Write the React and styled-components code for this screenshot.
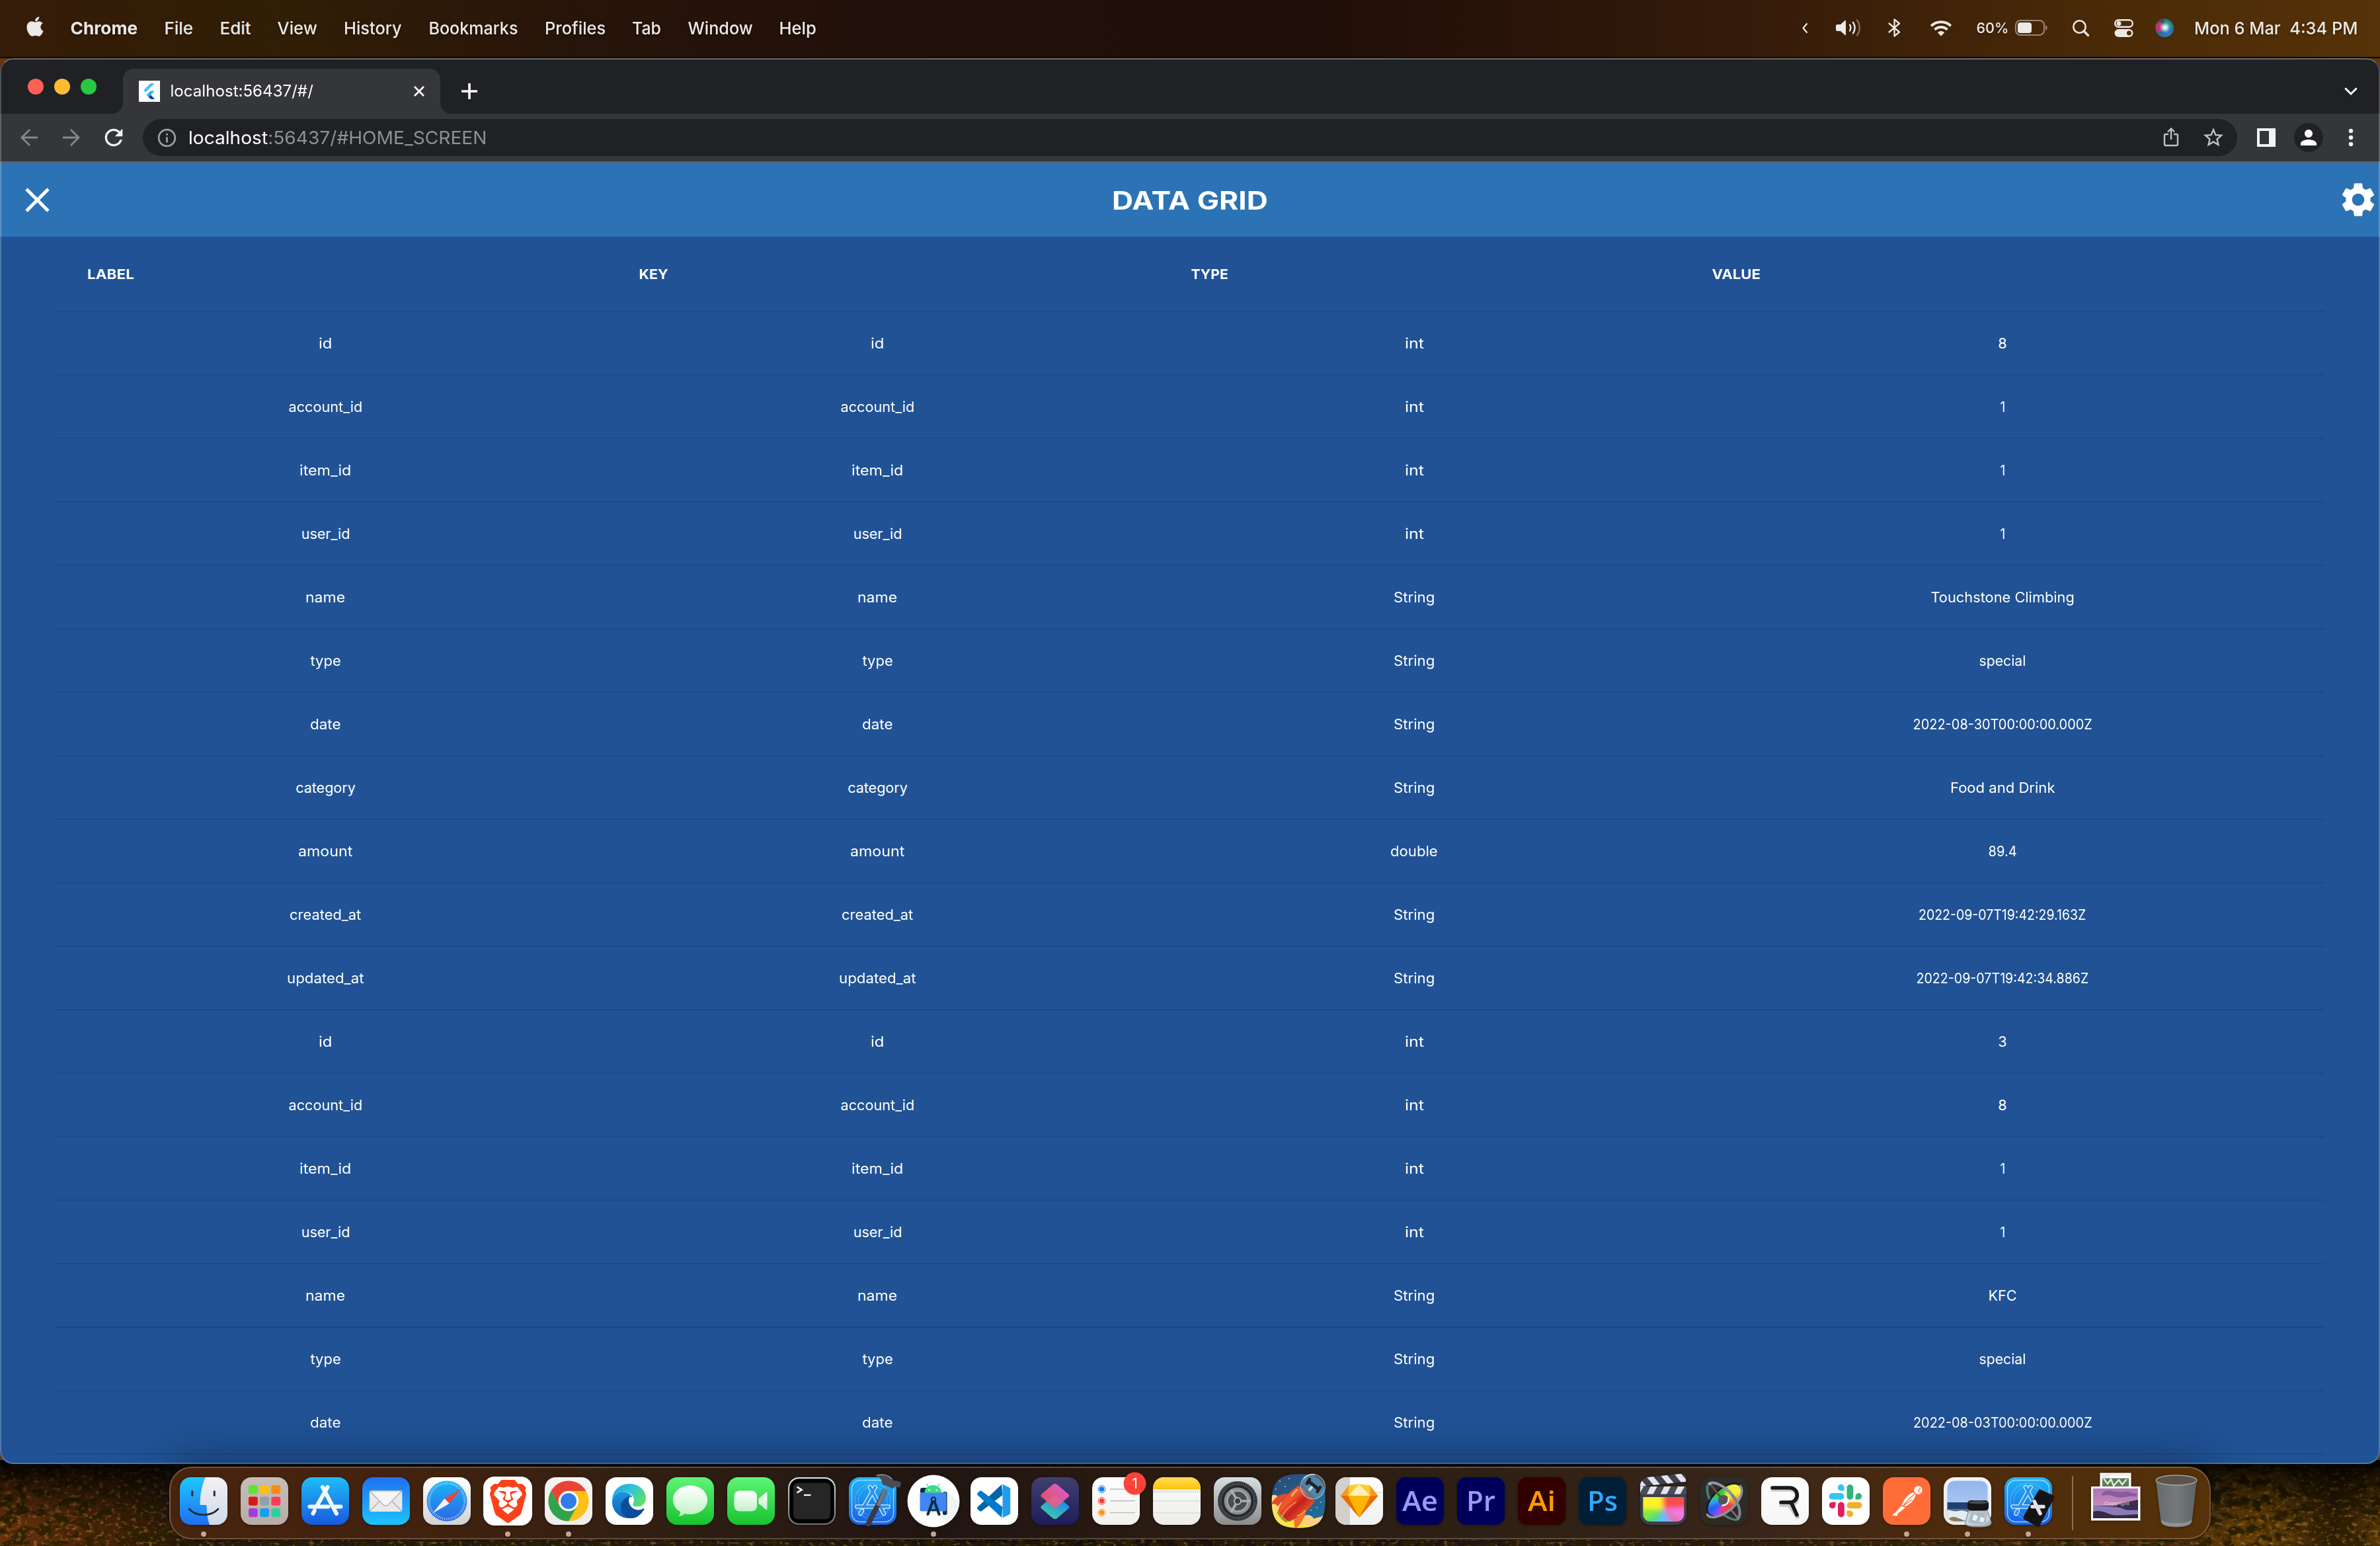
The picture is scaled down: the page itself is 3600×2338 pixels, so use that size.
import React, { useLayoutEffect, useRef, useState } from "react";
import styled, { createGlobalStyle } from "styled-components";
import { FaApple } from "react-icons/fa";
import { SiBrave } from "react-icons/si";
import { MdSettings, MdRefresh, MdInfoOutline, MdStarBorder, MdPerson } from "react-icons/md";

const UI = `Inter, Roboto, "Liberation Sans", sans-serif`;

const GlobalStyle = createGlobalStyle`
  *, *::before, *::after { box-sizing: border-box; }
  html, body { margin: 0; padding: 0; background: #0c0703; }
  body { font-family: ${UI}; overflow: hidden; }
  svg { display: block; flex: none; overflow: visible; }
`;

/* ---------- text that fills a known width ---------- */

const FitBox = styled.span`
  display: inline-flex;
  justify-content: center;
  flex: none;
  width: ${(p) => p.$width}px;
  white-space: pre;
`;
const FitInner = styled.span`
  display: inline-block;
  flex: none;
`;

function Fit({ width, children }) {
  const ref = useRef(null);
  const [scale, setScale] = useState(1);
  useLayoutEffect(() => {
    const natural = ref.current.offsetWidth;
    if (natural) setScale(width / natural);
  }, [width, children]);
  return (
    <FitBox $width={width}>
      <FitInner ref={ref} style={{ transform: `scaleX(${scale})` }}>
        {children}
      </FitInner>
    </FitBox>
  );
}

/* ---------- desktop ---------- */

const Desktop = styled.div`
  position: relative;
  isolation: isolate;
  width: 3600px;
  height: 2338px;
  display: flex;
  flex-direction: column;
  align-items: center;
  overflow: hidden;
  background: linear-gradient(90deg, #6b340c 0, #4a240a 160px, #2a1607 280px, #2a1a0b 900px, #1a0f07 1600px, #2a1a10 2500px, #5a3208 3250px, #6a4307 3440px, #2b1a05 3530px, #5d3a08 3600px);
`;
const Texture = styled.svg`
  position: absolute;
  left: 0;
  bottom: 0;
  z-index: -1;
`;

function WallpaperTexture() {
  return (
    <Texture width="3600" height="130" viewBox="0 0 3600 130">
      <filter id="grain" x="0" y="0" width="100%" height="100%">
        <feTurbulence type="fractalNoise" baseFrequency="0.05 0.07" numOctaves="5" seed="11" />
        <feColorMatrix values="0 0 0 0 0.03  0 0 0 0 0.015  0 0 0 0 0  5 0 0 0 -2.1" />
      </filter>
      <filter id="spark" x="0" y="0" width="100%" height="100%">
        <feTurbulence type="fractalNoise" baseFrequency="0.12 0.17" numOctaves="3" seed="4" />
        <feColorMatrix values="0 0 0 0 0.66  0 0 0 0 0.32  0 0 0 0 0.05  0 4 0 0 -2.2" />
      </filter>
      <linearGradient id="shade" x1="0" y1="0" x2="0" y2="1">
        <stop offset="0" stopColor="#000" stopOpacity="0.95" />
        <stop offset="0.25" stopColor="#000" stopOpacity="0.6" />
        <stop offset="0.75" stopColor="#000" stopOpacity="0.05" />
      </linearGradient>
      <rect width="3600" height="130" filter="url(#grain)" />
      <rect width="3600" height="130" filter="url(#spark)" opacity="0.5" />
      <rect width="3600" height="130" fill="url(#shade)" />
    </Texture>
  );
}

/* ---------- menu bar ---------- */

const MenuBar = styled.header`
  flex: none;
  width: 100%;
  height: 86px;
  margin-bottom: 2px;
  padding: 0 34px 2px 40px;
  display: flex;
  align-items: center;
  justify-content: space-between;
  color: #ece9e6;
  font-size: 26px;
  text-shadow: 0 2px 4px rgba(0, 0, 0, 0.35);
  background: linear-gradient(90deg, #351c08 0, #301e06 420px, #27140a 900px, #22100a 1300px, #200e08 2000px, #331a0a 2600px, #4a2a07 3200px, #563208 3600px);
  box-shadow: 0 2px 0 #0c0703;
`;
const Cluster = styled.div`
  display: flex;
  align-items: center;
`;
const Menus = styled.nav`
  display: flex;
  align-items: center;
  gap: 40.3px;
`;
const MenuItem = styled.span`
  font-weight: ${(p) => (p.$strong ? 700 : 500)};
`;
const Status = styled.span`
  display: flex;
  align-items: center;
  margin-left: ${(p) => p.$gap}px;
  font-size: ${(p) => (p.$small ? 22 : 26)}px;
  font-weight: 500;
`;
const AppleMark = styled(FaApple)`
  width: 30px;
  height: 34px;
  margin: -4px 38px 0 -2px;
`;

const MENUS = [
  ["Chrome", 102], ["File", 44], ["Edit", 47], ["View", 60], ["History", 88],
  ["Bookmarks", 135], ["Profiles", 92], ["Tab", 44], ["Window", 98], ["Help", 56],
];

const ink = "#ece9e6";

const ChevronLeft = () => (
  <svg width="8" height="15" viewBox="0 0 8 15">
    <path d="M7 1 1.5 7.5 7 14" fill="none" stroke={ink} strokeWidth="2.2" strokeLinecap="round" strokeLinejoin="round" />
  </svg>
);
const Volume = () => (
  <svg width="38" height="26" viewBox="0 0 38 26">
    <path d="M2.500 8H7l6-5.600c1.200-1 2-.6 2 .6v20c0 1.200-.8 1.600-2 .6L7 18H2.500C.8 18 0 17.200 0 15.500v-5C0 8.800.8 8 2.500 8Z" fill={ink} />
    <path d="M21 8.500c1.600 2.600 1.600 6.400 0 9M26 4.800c3.200 5 3.200 11.400 0 16.400" fill="none" stroke={ink} strokeWidth="2.400" strokeLinecap="round" />
    <path d="M32 1.500c5 7 5 16 0 23" fill="none" stroke={ink} strokeOpacity="0.4" strokeWidth="2.400" strokeLinecap="round" />
  </svg>
);
const Bluetooth = () => (
  <svg width="19" height="28" viewBox="0 0 19 28">
    <path d="M1.500 7.500 17 20.500 9.500 26.500V1.500L17 7.500 1.500 20.500" fill="none" stroke={ink} strokeWidth="2.300" strokeLinejoin="round" strokeLinecap="round" />
  </svg>
);
const Wifi = () => (
  <svg width="34" height="25" viewBox="0 0 34 25">
    <path d="M2.200 9.200a21.500 21.500 0 0 1 29.600 0" fill="none" stroke={ink} strokeWidth="4" />
    <path d="M7.500 14.800a14 14 0 0 1 19 0" fill="none" stroke={ink} strokeWidth="4" />
    <path d="M17 24.500 11.800 19.200a7.400 7.400 0 0 1 10.400 0Z" fill={ink} />
  </svg>
);
const Battery = () => (
  <svg width="49" height="24" viewBox="0 0 49 24">
    <rect x="1" y="1" width="43" height="22" rx="7" fill="none" stroke={ink} strokeOpacity="0.5" strokeWidth="2" />
    <rect x="4" y="4" width="21" height="16" rx="4" fill={ink} />
    <path d="M46 8c3.600 1.500 3.600 6.500 0 8Z" fill={ink} fillOpacity="0.5" />
  </svg>
);
const Search = () => (
  <svg width="25" height="25" viewBox="0 0 25 25">
    <circle cx="10.500" cy="10.500" r="9.200" fill="none" stroke={ink} strokeWidth="2.600" />
    <path d="m17 17 6.500 6.500" stroke={ink} strokeWidth="3.200" strokeLinecap="round" />
  </svg>
);
const ControlCentre = () => (
  <svg width="29" height="27" viewBox="0 0 29 27">
    <rect x="1.200" y="1.200" width="26.600" height="10.600" rx="5.300" fill="none" stroke={ink} strokeWidth="2.400" />
    <circle cx="7" cy="6.500" r="3.400" fill={ink} />
    <path fillRule="evenodd" d="M6.500 15h16a6 6 0 0 1 0 12h-16a6 6 0 0 1 0-12Zm16 2.500a3.500 3.500 0 1 0 0 7 3.500 3.500 0 0 0 0-7Z" fill={ink} />
  </svg>
);
const Siri = () => (
  <svg width="28" height="28" viewBox="0 0 28 28">
    <radialGradient id="siriCore"><stop offset="0" stopColor="#fff" /><stop offset="0.35" stopColor="#dff" stopOpacity="0.8" /><stop offset="1" stopColor="#8cf" stopOpacity="0" /></radialGradient>
    <linearGradient id="siriBase" x1="0" y1="0" x2="0.6" y2="1"><stop offset="0" stopColor="#4b4058" /><stop offset="0.5" stopColor="#3a5a78" /><stop offset="1" stopColor="#2a7fd0" /></linearGradient>
    <circle cx="14" cy="14" r="14" fill="url(#siriBase)" />
    <path d="M13 1a13 13 0 0 1 13 12c-5 1-10-1-13-12Z" fill="#12a07a" opacity="0.85" />
    <ellipse cx="7" cy="13" rx="6" ry="7.500" fill="#e0306e" opacity="0.8" />
    <circle cx="15" cy="13.500" r="9" fill="url(#siriCore)" />
  </svg>
);

function SystemMenuBar() {
  return (
    <MenuBar>
      <Cluster>
        <AppleMark />
        <Menus>
          {MENUS.map(([label, width], i) => (
            <MenuItem key={label} $strong={i === 0}>
              <Fit width={width}>{label}</Fit>
            </MenuItem>
          ))}
        </Menus>
      </Cluster>
      <Cluster>
        <Status $gap={0}><ChevronLeft /></Status>
        <Status $gap={43}><Volume /></Status>
        <Status $gap={41}><Bluetooth /></Status>
        <Status $gap={44}><Wifi /></Status>
        <Status $gap={36} $small><Fit width={49}>60%</Fit></Status>
        <Status $gap={10}><Battery /></Status>
        <Status $gap={38}><Search /></Status>
        <Status $gap={38}><ControlCentre /></Status>
        <Status $gap={33}><Siri /></Status>
        <Status $gap={31}><Fit width={247}>Mon 6 Mar  4:34 PM</Fit></Status>
      </Cluster>
    </MenuBar>
  );
}

/* ---------- browser window ---------- */

const Window = styled.main`
  position: relative;
  flex: none;
  width: 3600px;
  height: 2126px;
  display: flex;
  flex-direction: column;
  border-radius: 20px;
  overflow: hidden;
  background: #205295;
  &::after {
    content: "";
    position: absolute;
    inset: 0;
    border-radius: 20px;
    border: 2px solid rgba(255, 255, 255, 0.22);
    border-top-color: rgba(255, 255, 255, 0.34);
    pointer-events: none;
  }
`;
const TabStrip = styled.div`
  flex: none;
  height: 84px;
  padding: 16px 35px 0 42px;
  display: flex;
  background: #202124;
`;
const Lights = styled.div`
  display: flex;
  gap: 16px;
  margin: 15px 40px 0 0;
`;
const Light = styled.i`
  width: 24px;
  height: 24px;
  border-radius: 50%;
  background: ${(p) => p.$color};
`;
const Tab = styled.div`
  position: relative;
  width: 480px;
  height: 68px;
  padding: 0 23px 0 24px;
  display: flex;
  align-items: center;
  gap: 16px;
  border-radius: 16px 16px 0 0;
  background: #35363a;
  color: #fff;
  font-size: 24px;
  &::before,
  &::after {
    content: "";
    position: absolute;
    bottom: 0;
    width: 16px;
    height: 16px;
  }
  &::before {
    left: -16px;
    background: radial-gradient(circle at 0 0, transparent 15.5px, #35363a 16px);
  }
  &::after {
    right: -16px;
    background: radial-gradient(circle at 100% 0, transparent 15.5px, #35363a 16px);
  }
`;
const TabTitle = styled.span`
  margin-top: -2px;
`;
const TabClose = styled.svg`
  margin-left: auto;
`;
const NewTab = styled.svg`
  margin: 22px 0 0 32px;
`;
const TabSearch = styled.svg`
  margin: 29px 0 0 auto;
`;
const Toolbar = styled.div`
  flex: none;
  height: 74px;
  padding: 8px 35px 8px 31px;
  display: flex;
  align-items: center;
  background: #35363a;
  border-bottom: 2px solid #5f6064;
`;
const NavButtons = styled.div`
  display: flex;
  align-items: center;
  gap: 38px;
  width: 185px;
`;
const Reload = styled(MdRefresh)`
  width: 40px;
  height: 40px;
  margin-left: -7px;
  color: #f1f3f4;
`;
const Omnibox = styled.div`
  width: 3168px;
  height: 56px;
  padding: 0 18px 0 20px;
  display: flex;
  align-items: center;
  border-radius: 28px;
  background: #202124;
  color: #8f9093;
  font-size: 27.500px;
`;
const Host = styled.span`
  color: #fff;
`;
const InfoIcon = styled(MdInfoOutline)`
  width: 33px;
  height: 33px;
  margin-right: 16px;
  color: #9aa0a6;
`;
const Share = styled.svg`
  margin: -2px 35px 0 auto;
`;
const Star = styled(MdStarBorder)`
  width: 36px;
  height: 36px;
  margin-bottom: 1px;
  color: #bdc1c6;
`;
const ToolbarEnd = styled.div`
  display: flex;
  align-items: center;
  margin-left: auto;
`;
const Avatar = styled.div`
  width: 44px;
  height: 44px;
  margin: 0 39px 0 28px;
  display: flex;
  align-items: center;
  justify-content: center;
  border-radius: 50%;
  background: #202124;
  color: #fff;
  svg { width: 36px; height: 36px; }
`;

function FlutterFavicon() {
  return (
    <svg width="32" height="32" viewBox="0 0 32 32">
      <rect width="32" height="32" fill="#fff" />
      <path d="M17.500 4H24L10.500 17.500 7 14.500Z" fill="#47c5fb" />
      <path d="M17.500 15.500H24l-6 6 6 6.500h-6.500l-6-6.500Z" fill="#29b6f6" />
      <path d="m15 24.500 3-3 6 6.500h-5.500Z" fill="#1a3f90" />
    </svg>
  );
}

function BrowserChrome() {
  return (
    <>
      <TabStrip>
        <Lights>
          <Light $color="#ff5f57" />
          <Light $color="#febc2e" />
          <Light $color="#28c840" />
        </Lights>
        <Tab>
          <FlutterFavicon />
          <TabTitle><Fit width={216}>localhost:56437/#/</Fit></TabTitle>
          <TabClose width="18" height="18" viewBox="0 0 18 18">
            <path d="m2 2 14 14M16 2 2 16" stroke="#fff" strokeWidth="2.600" />
          </TabClose>
        </Tab>
        <NewTab width="24" height="24" viewBox="0 0 24 24">
          <path d="M12 0v24M0 12h24" stroke="#fff" strokeWidth="3.600" />
        </NewTab>
        <TabSearch width="18" height="11" viewBox="0 0 18 11">
          <path d="m1.200 1.200 7.800 7.800 7.800-7.800" fill="none" stroke="#fff" strokeWidth="3" strokeLinecap="round" />
        </TabSearch>
      </TabStrip>
      <Toolbar>
        <NavButtons>
          <svg width="26" height="26" viewBox="0 0 26 26">
            <path d="M26 13H2M14 1 2 13l12 12" fill="none" stroke="#87888b" strokeWidth="2.800" />
          </svg>
          <svg width="26" height="26" viewBox="0 0 26 26">
            <path d="M0 13h24M12 1l12 12-12 12" fill="none" stroke="#87888b" strokeWidth="2.800" />
          </svg>
          <Reload />
        </NavButtons>
        <Omnibox>
          <InfoIcon />
          <Fit width={451}>
            <Host>localhost</Host>:56437/#HOME_SCREEN
          </Fit>
          <Share width="22" height="28" viewBox="0 0 22 28">
            <path d="M7 10H3a2 2 0 0 0-2 2v13a2 2 0 0 0 2 2h16a2 2 0 0 0 2-2V12a2 2 0 0 0-2-2h-4M11 18V2M6 6.500l5-5 5 5" fill="none" stroke="#bdc1c6" strokeWidth="2.400" />
          </Share>
          <Star />
        </Omnibox>
        <ToolbarEnd>
          <svg width="28" height="28" viewBox="0 0 28 28">
            <path fillRule="evenodd" d="M0 0h28v28H0ZM4 4v20h14V4Z" fill="#f1f3f4" />
          </svg>
          <Avatar><MdPerson /></Avatar>
          <svg width="12" height="28" viewBox="0 0 12 28">
            <circle cx="3" cy="4" r="3.200" fill="#f1f3f4" />
            <circle cx="3" cy="14" r="3.200" fill="#f1f3f4" />
            <circle cx="3" cy="24" r="3.200" fill="#f1f3f4" />
          </svg>
        </ToolbarEnd>
      </Toolbar>
    </>
  );
}

/* ---------- data grid page ---------- */

const AppBar = styled.div`
  flex: none;
  height: 112px;
  padding: 0 2px 0 38px;
  display: grid;
  grid-template-columns: 1fr auto 1fr;
  align-items: center;
  background: #2c73b5;
  color: #fff;
`;
const AppTitle = styled.h1`
  margin: 2px 36px 0 0;
  font-size: 38px;
  font-weight: 700;
  line-height: 1;
`;
const Gear = styled(MdSettings)`
  width: 62px;
  height: 62px;
  justify-self: end;
`;
const Table = styled.div`
  width: 3432px;
  margin-left: 84px;
  color: #fff;
`;
const TableRow = styled.div`
  display: grid;
  grid-template-columns: 721px 721px 674px 878px;
  column-gap: 114px;
  align-items: center;
  height: ${(p) => (p.$head ? 114 : 96)}px;
  padding: ${(p) => (p.$head ? "2px 48px 0" : "0 48px 1px")};
  border-bottom: 2px solid #1d4a86;
  font-size: ${(p) => (p.$head ? 20 : 21.500)}px;
  font-weight: ${(p) => (p.$head ? 700 : 400)};
`;
const Cell = styled.div`
  display: flex;
  justify-content: ${(p) => (p.$start ? "flex-start" : "center")};
`;

const HEADINGS = ["LABEL", "KEY", "TYPE", "VALUE"];
const FIELDS = [
  ["id", "int", "8"],
  ["account_id", "int", "1"],
  ["item_id", "int", "1"],
  ["user_id", "int", "1"],
  ["name", "String", "Touchstone Climbing"],
  ["type", "String", "special"],
  ["date", "String", "2022-08-30T00:00:00.000Z"],
  ["category", "String", "Food and Drink"],
  ["amount", "double", "89.4"],
  ["created_at", "String", "2022-09-07T19:42:29.163Z"],
  ["updated_at", "String", "2022-09-07T19:42:34.886Z"],
  ["id", "int", "3"],
  ["account_id", "int", "8"],
  ["item_id", "int", "1"],
  ["user_id", "int", "1"],
  ["name", "String", "KFC"],
  ["type", "String", "special"],
  ["date", "String", "2022-08-03T00:00:00.000Z"],
];
const WIDTHS = {
  LABEL: 71, KEY: 44, TYPE: 56, VALUE: 73,
  id: 20, account_id: 112, item_id: 78, user_id: 74, name: 60, type: 46, date: 47,
  category: 91, amount: 82, created_at: 108, updated_at: 117,
  int: 29, String: 62, double: 72, 8: 13, 3: 13, 1: 8,
  "Touchstone Climbing": 217, special: 71, "Food and Drink": 158, "89.4": 43, KFC: 43,
  "2022-08-30T00:00:00.000Z": 271, "2022-08-03T00:00:00.000Z": 271,
  "2022-09-07T19:42:29.163Z": 253, "2022-09-07T19:42:34.886Z": 261,
};

function DataGrid() {
  return (
    <>
      <AppBar>
        <svg width="37" height="37" viewBox="0 0 37 37">
          <path d="m2 2 33 33M35 2 2 35" stroke="#fff" strokeWidth="5" />
        </svg>
        <AppTitle><Fit width={236}>DATA GRID</Fit></AppTitle>
        <Gear />
      </AppBar>
      <Table>
        <TableRow $head>
          {HEADINGS.map((h) => (
            <Cell key={h} $start><Fit width={WIDTHS[h]}>{h}</Fit></Cell>
          ))}
        </TableRow>
        {FIELDS.map(([name, type, value], i) => (
          <TableRow key={i}>
            {[name, name, type, value].map((text, c) => (
              <Cell key={c}><Fit width={WIDTHS[text]}>{text}</Fit></Cell>
            ))}
          </TableRow>
        ))}
      </Table>
    </>
  );
}

/* ---------- dock ---------- */

const DockBar = styled.footer`
  position: relative;
  flex: none;
  width: 3088px;
  height: 110px;
  margin-top: 4px;
  padding: 14px 14px 0;
  display: flex;
  align-items: flex-start;
  gap: 20px;
  border: 2px solid rgba(255, 235, 215, 0.24);
  border-radius: 34px;
  background: linear-gradient(90deg, #48240e 0, #41220f 400px, #2d1e12 800px, #211512 1150px, #2a1b12 1500px, #2f2015 2000px, #39261a 2400px, #4b2a0e 2650px, #563208 3088px);
  box-shadow: 0 -10px 70px rgba(8, 22, 40, 0.4), 0 0 2px 1px rgba(0, 0, 0, 0.6);
`;
const DockItem = styled.div`
  flex: none;
  width: 72px;
  display: flex;
  flex-direction: column;
  align-items: center;
  gap: 10px;
  filter: drop-shadow(0 1px 2px rgba(0, 0, 0, 0.35));
`;
const RunningDot = styled.i`
  width: 8px;
  height: 8px;
  border-radius: 50%;
  background: #c4a493;
`;
const DockRule = styled.i`
  flex: none;
  width: 2px;
  height: 82px;
  margin: -2px 8px 0 10px;
  background: rgba(220, 190, 160, 0.45);
`;

function Icon({ children }) {
  return <svg width="72" height="72" viewBox="0 0 72 72">{children}</svg>;
}
function Fade({ id, from, to, x2 = 0, y2 = 1 }) {
  return (
    <linearGradient id={id} x1="0" y1="0" x2={x2} y2={y2}>
      <stop offset="0" stopColor={from} />
      <stop offset="1" stopColor={to} />
    </linearGradient>
  );
}
function Tile({ id, from, to = from, rx = 16.500 }) {
  return (
    <>
      <Fade id={id} from={from} to={to} />
      <rect width="72" height="72" rx={rx} fill={`url(#${id})`} />
    </>
  );
}

const Finder = () => (
  <Icon>
    <Fade id="fnL" from="#1ec8fe" to="#1f6ff2" />
    <Fade id="fnR" from="#f2f1f4" to="#ced9e8" />
    <clipPath id="fnC"><rect width="72" height="72" rx="16.500" /></clipPath>
    <g clipPath="url(#fnC)">
      <rect width="72" height="72" fill="url(#fnL)" />
      <path d="M39 0C33 12 31 26 30.500 40c0 1.500.5 2 2 2h6.500c1.200 0 1.500.5 1.500 1.500.2 10 1.500 20 4.500 28.500h27V0Z" fill="url(#fnR)" />
    </g>
    <path d="M18.800 21.500v6M52.300 21.500v6" stroke="#2b2b33" strokeWidth="3" strokeLinecap="round" />
    <path d="M14 48c11 12 33 12 44 0" fill="none" stroke="#222631" strokeWidth="2.600" strokeLinecap="round" />
  </Icon>
);

const PADS = ["#5ee432", "#ffbe0b", "#fb8c0f", "#d91616", "#93a0a6", "#fc3a5b", "#a03fdc", "#14a0f5", "#2fcf9c"];
const Launchpad = () => (
  <Icon>
    <Tile id="lp" from="#c4beb8" to="#b9ada5" />
    {PADS.map((c, i) => (
      <rect key={i} x={12 + (i % 3) * 17.200} y={12 + Math.floor(i / 3) * 17.500} width="13.800" height="13.200" rx="3" fill={c} />
    ))}
  </Icon>
);

const StoreGlyph = ({ color, width }) => (
  <path d="M39.500 15 23.500 43M19.800 50.500 17.500 55M32 15l21 40M12.500 44.500h28M50 44.500h9.500" fill="none" stroke={color} strokeWidth={width} strokeLinecap="round" />
);
const AppStore = () => (
  <Icon>
    <Tile id="as" from="#1fbdf8" to="#1759de" />
    <StoreGlyph color="#f4f8fd" width="6" />
  </Icon>
);

const Mail = () => (
  <Icon>
    <Tile id="ml" from="#2070f2" to="#1cc4fd" />
    <rect x="10.800" y="20" width="49.500" height="32" rx="3" fill="#e9e9ea" />
    <path d="m11.500 51 17-17M59.500 51l-17-17" stroke="#a9a9ac" strokeWidth="1.200" />
    <path d="m11.500 21 20 20.500c2.600 2.500 5.400 2.500 8 0L59.500 21Z" fill="#f6f6f6" stroke="#aeaeb0" strokeWidth="1.200" />
  </Icon>
);

const Safari = () => (
  <Icon>
    <Tile id="sf" from="#ffffff" to="#d2d2d4" />
    <Fade id="sfd" from="#1bb4f4" to="#2a67e6" />
    <circle cx="36" cy="36" r="30.500" fill="url(#sfd)" />
    <circle cx="36" cy="36" r="27" fill="none" stroke="#d8eefc" strokeWidth="3.600" strokeDasharray="0.900 1.930" opacity="0.85" />
    <path d="M57.500 17.500 32.300 32.300l7.400 7.400Z" fill="#f0443a" />
    <path d="M14.500 54.500l17.800-22.200 7.400 7.400Z" fill="#f3f3f5" />
  </Icon>
);

const BraveTile = styled.div`
  width: 74px;
  height: 74px;
  margin: -1px -1px;
  display: flex;
  align-items: center;
  justify-content: center;
  border-radius: 17px;
  background: #fff;
`;
const Brave = () => (
  <BraveTile>
    <SiBrave size={65} color="#fb4218" />
  </BraveTile>
);

const Chrome = () => (
  <Icon>
    <Tile id="ch" from="#f6f5f3" to="#eeedeb" />
    <circle cx="36" cy="36" r="30.500" fill="#fbc116" />
    <path d="M9.600 20.750A30.500 30.500 0 0 1 62.400 20.750H36A15.250 15.250 0 0 0 22.800 43.600Z" fill="#e94335" />
    <path d="M9.600 20.750A30.500 30.500 0 0 0 36 66.500L49.200 43.600A15.250 15.250 0 0 1 22.800 43.600Z" fill="#31a350" />
    <circle cx="36" cy="36" r="15.200" fill="#fff" />
    <circle cx="36" cy="36" r="12" fill="#2f7de9" />
  </Icon>
);

const Edge = () => (
  <Icon>
    <Tile id="ed" from="#ffffff" />
    <linearGradient id="edT" x1="0" y1="0.200" x2="1" y2="0.700"><stop offset="0" stopColor="#27a4e4" /><stop offset="0.500" stopColor="#33c6d6" /><stop offset="1" stopColor="#62e05a" /></linearGradient>
    <Fade id="edM" from="#1a95e0" to="#0f5fb8" />
    <path d="M10 34C11 19 22 10 36 10c15 0 25 10 25 21.500C61 40 55 44.500 47.500 44.500c-5 0-7.500-2-6-4.500 3-5 1.500-13-6-16-9-3.500-22-.5-25.500 10Z" fill="url(#edT)" />
    <path d="M10 36c1-9 9-13.500 17-13.500 6.500 0 12 3.500 13.500 8C31 28 26 38 30 46c3 7 9 10 14 15-19 5-35-8-34-25Z" fill="url(#edM)" />
    <path d="M23 43c1-8 8-13.500 14.500-14.500-4 4-3 12 2 17 5 4.500 12 5 17.500 2 1.200-.6 2 .2 1.300 1.500C53 57.500 46 62 39.500 62 29 62 22 53 23 43Z" fill="#0d4c9c" />
  </Icon>
);

const Messages = () => (
  <Icon>
    <Tile id="ms" from="#5ff578" to="#17c22f" />
    <Fade id="msb" from="#ffffff" to="#c2f2c6" />
    <path d="M36 12.500c15 0 26 9.500 26 21.800S51 56 36 56c-3 0-6-.3-8.500-1.100-2.300 2.600-5.500 4.100-9 4.100 1.500-2 2.500-4.200 2.700-6.800C14 48.500 10 42 10 34.300 10 22 21 12.500 36 12.500Z" fill="url(#msb)" />
  </Icon>
);

const FaceTime = () => (
  <Icon>
    <Tile id="ft" from="#5ff578" to="#17c22f" />
    <Fade id="ftb" from="#ffffff" to="#c5efc9" />
    <rect x="10.500" y="20.500" width="34.500" height="31" rx="8" fill="url(#ftb)" />
    <path d="M47.500 32.500 58 23.500c1.500-1.200 2.500-.6 2.500 1v23c0 1.600-1 2.200-2.500 1l-10.500-9Z" fill="url(#ftb)" />
  </Icon>
);

const Terminal = () => (
  <Icon>
    <Tile id="tm" from="#cfe0e2" to="#6f6c6c" />
    <rect x="2.200" y="2.200" width="67.600" height="67.600" rx="14.500" fill="#000" />
    <rect x="8" y="8.500" width="56" height="55" rx="7" fill="#262626" />
    <path d="m13.500 14.500 7 4.500-7 4.500" fill="none" stroke="#fff" strokeWidth="2.600" />
    <path d="M24 27h10.500" stroke="#fff" strokeWidth="2.200" />
  </Icon>
);

const BlueprintTile = ({ id }) => (
  <>
    <Tile id={id} from="#1db8f6" to="#1b5fe4" />
    <rect x="4.500" y="4.500" width="63" height="63" rx="12.500" fill="none" stroke="#bfe4ff" strokeOpacity="0.800" strokeWidth="1.400" />
    <circle cx="36" cy="36" r="27" fill="none" stroke="#bfe4ff" strokeOpacity="0.350" strokeWidth="1.200" />
    <circle cx="36" cy="36" r="22" fill="none" stroke="#bfe4ff" strokeOpacity="0.300" strokeWidth="1" />
    <StoreGlyph color="#d6efff" width="6.600" />
    <StoreGlyph color="#2a91ee" width="4" />
  </>
);
const Xcode = () => (
  <Icon>
    <BlueprintTile id="xc" />
    <path d="m52 18 6.500 2.500-25.500 52c-1.500 3.500-8.500 2.500-8-2Z" fill="#3a3a42" />
    <path d="m53 16.500 5.500 2.500-12 25-5-2Z" fill="#74747c" />
    <path d="M40-2c7-5 19-3 26 4l2 3 5 .5 6.500 2.500-2.500 8-7-2-3.500 3.500-8-4-8-3C50 2 46-1 40-2Z" fill="#4a4b54" />
    <path d="M42-2.500c8-3 17-1 23 5" fill="none" stroke="#9a9ba4" strokeWidth="1.400" />
  </Icon>
);

const AndroidStudio = () => (
  <Icon>
    <circle cx="36" cy="36" r="39.500" fill="#fff" />
    <path d="m50 13 23 24c0 10-6 22-14 29L30 54Z" fill="#eceef0" opacity="0.700" />
    <rect x="16" y="16" width="14" height="10" rx="3" fill="#073042" />
    <rect x="50" y="22" width="6.500" height="35" rx="2.500" fill="#073042" />
    <rect x="15.500" y="23" width="40" height="28.500" rx="2" fill="#4285f4" />
    <path d="M22.500 23.500a12.800 11.500 0 0 1 25.600 0Z" fill="#3ddc84" />
    <path d="m28 14-2.500-4M42.500 14 45 10" stroke="#3ddc84" strokeWidth="1.400" />
    <circle cx="29.500" cy="19.500" r="1.200" fill="#fff" /><circle cx="41" cy="19.500" r="1.200" fill="#fff" />
    <circle cx="36" cy="33.500" r="3.200" fill="none" stroke="#073042" strokeWidth="2.200" />
    <path d="m34.500 37-7 19M37.500 37l7 19" stroke="#073042" strokeWidth="4" strokeLinecap="round" />
    <path d="M29.500 48c4 2.500 9 2.500 13 0" fill="none" stroke="#073042" strokeWidth="2.600" />
  </Icon>
);

const VSCode = () => (
  <Icon>
    <Tile id="vs" from="#ffffff" />
    <path d="m47 11 1.500 16L17 51c-1.200.9-2.300.9-3.300 0l-2.900-2.700c-1-.9-1-2.200 0-3.200Z" fill="#0065a9" />
    <path d="m47 61 1.500-16L17 21c-1.200-.9-2.300-.9-3.300 0l-2.900 2.700c-1 .9-1 2.200 0 3.200Z" fill="#007acc" />
    <path d="M47 11.200c.7-.7 1.200-.7 2-.3l9.700 4.700c1 .5 1.500 1.300 1.500 2.400v36c0 1.100-.5 1.900-1.500 2.400L49 61.100c-.8.400-1.300.4-2-.3 1 .7 1.500.2 1.500-1.300v-47c0-1.500-.5-2-1.500-1.300Z" fill="#1f9cf0" />
  </Icon>
);

const Shortcuts = () => (
  <Icon>
    <Tile id="sc" from="#40406e" to="#201c5c" />
    <linearGradient id="scA" x1="0.200" y1="1" x2="0.800" y2="0"><stop offset="0" stopColor="#45cf9b" /><stop offset="1" stopColor="#1c7dfb" /></linearGradient>
    <linearGradient id="scB" x1="0" y1="0.800" x2="0.800" y2="0.100"><stop offset="0" stopColor="#f9584f" /><stop offset="1" stopColor="#f15fd6" /></linearGradient>
    <path d="m39 28.500 17 14.500c1.800 1.600 1.800 3 0 4.600L39 62c-2 1.700-4.500 1.700-6.500 0L15.500 47.600c-1.800-1.600-1.800-3 0-4.600l17-14.500Z" fill="url(#scA)" />
    <path d="m39 11 17 14.500c1.800 1.600 1.800 3 0 4.600L39 44.500c-2 1.700-4.500 1.700-6.500 0L15.500 30.100c-1.800-1.600-1.800-3 0-4.600l17-14.500c2-1.700 4.500-1.700 6.500 0Z" fill="url(#scB)" opacity="0.880" />
  </Icon>
);

const Reminders = () => (
  <Icon>
    <Tile id="rm" from="#ffffff" to="#f1f0ec" />
    {["#1279f8", "#fb3a2f", "#fb9209"].map((c, i) => (
      <g key={c}>
        <circle cx="14.500" cy={18 + i * 17.800} r="3.800" fill={c} />
        <circle cx="14.500" cy={18 + i * 17.800} r="5.400" fill="none" stroke={c} strokeWidth="1" />
        <path d={`M27 ${18 + i * 17.800}h38`} stroke="#b9b9bb" strokeWidth="1.400" />
      </g>
    ))}
    <circle cx="64.500" cy="9.500" r="17" fill="#fb4338" />
    <text x="64.500" y="17" textAnchor="middle" fontFamily='Inter, "Liberation Sans", sans-serif' fontSize="21" fill="#fff">1</text>
  </Icon>
);

const Notes = () => (
  <Icon>
    <Tile id="nt" from="#fbfbf9" to="#eeedea" />
    <Fade id="ntY" from="#ffdc58" to="#ffc208" />
    <path d="M0 18.500v-2A16.500 16.500 0 0 1 16.500 0h39A16.500 16.500 0 0 1 72 16.500v2Z" fill="url(#ntY)" />
    <path d="M1 22h70" stroke="#c4c2bd" strokeWidth="2.400" strokeDasharray="1.200 1.800" />
    <path d="M0 36h72M0 54h72" stroke="#d0cfcc" strokeWidth="1.200" />
  </Icon>
);

const Settings = () => (
  <Icon>
    <Tile id="st" from="#d5dfe3" to="#8c8b8b" />
    <circle cx="36" cy="36" r="30" fill="#55585a" />
    <circle cx="36" cy="36" r="27.500" fill="none" stroke="#222528" strokeWidth="4" strokeDasharray="1.500 1.400" />
    <circle cx="36" cy="36" r="22.500" fill="#8a8e90" stroke="#25282a" strokeWidth="4" />
    <circle cx="36" cy="36" r="15.500" fill="#4a4e50" stroke="#a4a8aa" strokeWidth="2.400" />
    <path d="M36 36h20M36 36 26 18.700M36 36 26 53.300" stroke="#a9adaf" strokeWidth="3.600" />
    <circle cx="36" cy="36" r="5" fill="#3b3f41" stroke="#b4b7b9" strokeWidth="2" />
  </Icon>
);

const ROCKET_SHAPE = "M36-4.700C64-4.700 76.700 2 76.700 34S66 76.700 36 76.700-4.300 66-4.300 36 8-4.700 36-4.700Z";
const Rocket = () => (
  <Icon>
    <Fade id="rkS" from="#2b4a78" to="#1f6f9c" x2={0.800} />
    <linearGradient id="rkB" x1="0.150" y1="0.150" x2="0.800" y2="0.800"><stop offset="0" stopColor="#e8502a" /><stop offset="0.350" stopColor="#f2552a" /><stop offset="0.600" stopColor="#c41f1c" /><stop offset="1" stopColor="#e8642c" /></linearGradient>
    <Fade id="rkC" from="#ffd98a" to="#ffe53a" />
    <clipPath id="rkP"><path d={ROCKET_SHAPE} /></clipPath>
    <path d={ROCKET_SHAPE} fill="url(#rkS)" />
    <g clipPath="url(#rkP)">
      <path d="M-5 28c6-3 10 0 11 4 5 0 6 5 4 9v14l20 6c6 2 10 1 14-2 8-4 14 1 15 4 7-3 13-1 18-8v24H-5Z" fill="url(#rkC)" />
      <path d="M44 59c6-4 14-1 15 4 7-3 12-2 18-8v10c-8 6-22 8-33 6Z" fill="#ffcf86" />
      <path d="M20 25C8 24-2 32-5 41c4-2 7 0 10 3Z" fill="#dd4a30" />
      <path d="M47 45c2 12-6 24-15 33-3-4-2-9-3-13Z" fill="#f5722c" />
      {[[8, 6], [22, 2], [16, 14], [64, 46], [70, 38], [55, 50], [2, 18]].map(([x, y]) => (
        <circle key={`${x}-${y}`} cx={x} cy={y} r="0.900" fill="#bcd6ea" />
      ))}
    </g>
    <path d="M38 12C24 19 10 34 5 51c4 6 10 12 17 16 16-6 32-18 39.500-33Z" fill="url(#rkB)" />
    <path d="M5 51c4 6 10 12 17 16l-5 1C11 65 7 60 4 54Z" fill="#8f9a2c" />
    <path d="m38.500 11.500 22.500 22" stroke="#3d4440" strokeWidth="4" />
    <path d="M34 19c-4 3-6 6-8 9" stroke="#ffc36a" strokeWidth="2.400" strokeLinecap="round" />
    <path d="M33 37C23 43 14 52 9 63" fill="none" stroke="#ff9f7e" strokeWidth="1.400" />
    <path d="M47 50c-4 4-8 7-13 9" fill="none" stroke="#ff9a3c" strokeWidth="2" />
    <circle cx="57.700" cy="14.300" r="18.600" fill="#8fbdd2" fillOpacity="0.420" stroke="#b9d3df" strokeOpacity="0.700" strokeWidth="1.200" />
    <path d="M44 2c4-5 10-7 16-6" fill="none" stroke="#e6f2f7" strokeWidth="2" strokeLinecap="round" opacity="0.700" />
    <path d="m58 13-6 7" stroke="#d5d9dc" strokeWidth="4" />
    <path d="m50.500 5.500 17 13.500" stroke="#1e2226" strokeWidth="5" />
    <path d="m53 3-4 6.500M69 15l-4.500 7" stroke="#1e2226" strokeWidth="4.500" strokeLinecap="round" />
  </Icon>
);

const Sketch = () => (
  <Icon>
    <Tile id="sk" from="#ffffff" to="#f0f0f0" />
    <path d="M16.500 0H22v72h-5.500A16.500 16.500 0 0 1 0 55.500v-39A16.500 16.500 0 0 1 16.500 0Z" fill="#d3cfcd" />
    <path d="M22 23h50" stroke="#d4d4d4" strokeWidth="1" />
    <path d="M20 12.500 36 10.500l16 2L64.500 28 36 61 8 28Z" fill="#fdb600" />
    <path d="M36 10.500 19 28h34Z" fill="#feeeb7" />
    <path d="M20 12.500 19 28 36 10.500Z" fill="#fdcb31" /><path d="M52 12.500 53 28 36 10.500Z" fill="#fdcb31" />
    <path d="M20 12.500 8 28h11ZM52 12.500 64.500 28H53Z" fill="#f79a1c" />
    <path d="M8 28 36 61 19 28ZM64.500 28 36 61l17-33Z" fill="#ea6c00" />
  </Icon>
);

const AdobeIcon = ({ id, label, bg, fg, width }) => (
  <Icon>
    <Tile id={id} from={bg} rx={14} />
    <text x={36 - width / 2} y="51" textLength={width} lengthAdjust="spacingAndGlyphs" fontFamily='"Open Sans", "Noto Sans", sans-serif' fontWeight="600" fontSize="42" fill={fg}>{label}</text>
  </Icon>
);
const AfterEffects = () => <AdobeIcon id="ae" label="Ae" bg="#00005b" fg="#9999ff" width={54} />;
const Premiere = () => <AdobeIcon id="pr" label="Pr" bg="#00005b" fg="#9999ff" width={44} />;
const Illustrator = () => <AdobeIcon id="ai" label="Ai" bg="#330000" fg="#ff9a00" width={42} />;
const Photoshop = () => <AdobeIcon id="ps" label="Ps" bg="#001e36" fg="#31a8ff" width={46} />;

const FinalCut = () => (
  <Icon>
    <clipPath id="fcC"><path d="M5.300 30h62v26a11 11 0 0 1-11 11h-40a11 11 0 0 1-11-11Z" /></clipPath>
    <clipPath id="fcT"><path d="M.700 12Q3 2 12 0L60-5Q69-6 70 0V6.700L1.700 14Z" /></clipPath>
    <clipPath id="fcM"><path d="M1 14h70v11.500H1Z" /></clipPath>
    <filter id="fcB"><feGaussianBlur stdDeviation="3.500" /></filter>
    <path d="M1 14h70v42a16 16 0 0 1-16 16H17A16 16 0 0 1 1 56Z" fill="#3c3f4c" />
    <g clipPath="url(#fcC)">
      <g filter="url(#fcB)">
        <path d="M-10 10h100v80H-10Z" fill="#fb4b4b" />
        <path d="M36 48 34 10H-20v38Z" fill="#fff02a" />
        <path d="M36 48-20 48v40Z" fill="#7fe83a" />
        <path d="m36 48-46 30 20 20Z" fill="#3fe07c" />
        <path d="M36 48 16 90h34Z" fill="#55c8f8" />
        <path d="m36 48 4 42h30Z" fill="#8aa4f8" />
        <path d="m36 48 50 40V44Z" fill="#ee7be0" />
      </g>
    </g>
    <g clipPath="url(#fcM)">
      <path d="M1 14h70v12H1Z" fill="#4a4d5a" />
      {[-4, 16.700, 37.300, 58].map((x) => <path key={x} d={`M${x} 14h10l-6.500 12h-9.500Z`} fill="#e4e4f0" />)}
    </g>
    <g clipPath="url(#fcT)">
      <path d="M0-6h72v30H0Z" fill="#3e414d" />
      {[-10, 11, 32, 53].map((x, i) => <path key={x} d={`M${x} ${2 - i * 2.100}l9.500-1.400 11 13-9.500 1.600Z`} fill="#e4e4f0" />)}
    </g>
  </Icon>
);

const Motion = () => (
  <Icon>
    <Tile id="mo" from="#2d2d2d" to="#2e2a22" />
    <clipPath id="moC"><ellipse cx="36.500" cy="34.500" rx="31" ry="16" transform="rotate(-42 36.500 34.500)" /></clipPath>
    <filter id="moB"><feGaussianBlur stdDeviation="2.600" /></filter>
    <path d="M11 12c-3 12 4 28 17 39 10 9 24 16 29 12" fill="none" stroke="#4b7f78" strokeWidth="3.600" />
    <g clipPath="url(#moC)">
      <g filter="url(#moB)">
        <path d="M-10-10h92v92h-92Z" fill="#36c84a" />
        <path d="M36 35 46-10h40v30Z" fill="#f6ee3c" />
        <path d="m36 35 50-17v34Z" fill="#f79a2c" />
        <path d="m36 35 50 15-40 40Z" fill="#f0403c" />
        <path d="m36 35 12 50H14Z" fill="#f4385a" />
        <path d="M36 35 22 80H-5Z" fill="#8a4be8" />
        <path d="M36 35 2 80-20 50Z" fill="#2b5df4" />
        <path d="M36 35-20 54V30Z" fill="#2ba8f0" />
      </g>
    </g>
    <ellipse cx="36.500" cy="34.500" rx="32" ry="17" transform="rotate(-42 36.500 34.500)" fill="none" stroke="#15161a" strokeWidth="2.400" />
    <path d="M60.500 13.500c7 9-4 29-20 39-12 8-26 11-30 4" fill="none" stroke="#8d91a2" strokeWidth="3.600" strokeLinecap="round" />
    <circle cx="35" cy="35" r="8" fill="#4d5560" />
    <path d="M42.500 32c1 6-3 10.500-9 10.500" fill="none" stroke="#f2f4f6" strokeWidth="2.400" strokeLinecap="round" />
    <path d="m14.500 10 21 26" stroke="#6b4a52" strokeWidth="3" strokeLinecap="round" />
    <path d="M13 10c7-5 24 3 35 17 10 12 15 28 9 35" fill="none" stroke="#7d8090" strokeWidth="4.400" strokeLinecap="round" />
    <path d="M14 9c8-3 23 4 33 17" fill="none" stroke="#b4b7c6" strokeWidth="1.200" />
    <path d="m48 51 8 10" stroke="#8c7078" strokeWidth="2.600" strokeLinecap="round" />
    <circle cx="14.500" cy="10" r="2.200" fill="#a7a9b4" />
  </Icon>
);

const Rize = () => (
  <Icon>
    <Tile id="rz" from="#ffffff" to="#f5f5f5" />
    <path d="M17 16h27c14 0 14 23 0 23H30M42 39l13 18" fill="none" stroke="#000" strokeOpacity="0.180" strokeWidth="6" transform="translate(0 3)" strokeLinecap="round" />
    <path d="M17 16h26c15 0 15 22 0 22H30M43 38c3 1 4 3 5.500 7l5.500 12" fill="none" stroke="#17191c" strokeWidth="5.600" strokeLinecap="round" />
  </Icon>
);

const Slack = () => (
  <Icon>
    <Tile id="sl" from="#ffffff" />
    <g fill="#36c5f0"><rect x="10.500" y="24" width="23" height="9.800" rx="4.900" /><path d="M33.500 20.500h-5a4.900 4.900 0 1 1 5-5Z" /></g>
    <g fill="#2eb67d"><rect x="37.500" y="11" width="9.800" height="23" rx="4.900" /><path d="M50.500 33.800v-5a4.900 4.900 0 1 1 5 5Z" /></g>
    <g fill="#e01e5a"><rect x="24" y="37.500" width="9.800" height="23" rx="4.900" /><path d="M20.500 37.500v5a4.900 4.900 0 1 1-5-5Z" /></g>
    <g fill="#ecb22e"><rect x="37.500" y="37.500" width="23" height="9.800" rx="4.900" /><path d="M37.500 50.500h5a4.900 4.900 0 1 1-5 5Z" /></g>
  </Icon>
);

const Postman = () => (
  <Icon>
    <Tile id="pm" from="#ff6c37" />
    <circle cx="53.500" cy="19.500" r="6.200" fill="#fff" />
    <path d="m53 20 4-3.500M53 20l4 3" stroke="#ff6c37" strokeWidth="1.200" />
    <path d="M46 23c-7 2-14 10-17.500 19l6.500 2c7-4 14-11 14.500-18Z" fill="#fff" />
    <path d="M28 43.500 18.500 54l2 2.500L34 46Z" fill="#fff" />
    <path d="m17.500 54 5.500 1-1.500 3.500-7.500-.8Z" fill="#fff" />
    <path d="M48 25 31.500 41.500M44.500 33.500 30 44M27.500 43l8 2" stroke="#ff6c37" strokeWidth="1.200" fill="none" />
  </Icon>
);

const Preview = () => (
  <Icon>
    <Tile id="pvT" from="#f4f4f4" to="#e6e6e6" />
    <clipPath id="pvC"><rect x="5.500" y="5.500" width="61" height="61" rx="11" /></clipPath>
    <Fade id="pvS" from="#8db2ee" to="#a9c6f2" />
    <g clipPath="url(#pvC)">
      <rect width="72" height="40" fill="url(#pvS)" />
      <rect y="38" width="72" height="11" fill="#22406e" />
      <rect y="48" width="72" height="24" fill="#4f7596" />
      <path d="M0 50c8-3 14 3 22 1s14 1 20 5l-4 12-16-6-22 4Z" fill="#e4ecf1" />
      <path d="M4 66c5-6 12-8 18-4l8 8H4Z" fill="#8f7c58" />
    </g>
    <path d="M38 50h28l5.500 17c2 5-4 8-19.500 8s-21-3-19-8Z" fill="#c9d0d4" fillOpacity="0.850" stroke="#8a9298" strokeWidth="1.200" />
    <path d="M42 54h19l4 14c-6 4-22 4-28 0Z" fill="#a9bccb" /><path d="m46 56 6 3-3 7-6-2ZM56 60l6 2-2 6-6-1Z" fill="#eef2f4" />
    <rect x="36" y="35" width="32" height="15.500" rx="5" fill="#151517" />
    <ellipse cx="52" cy="38" rx="14.500" ry="2.600" fill="#4b4b4f" />
  </Icon>
);

const Simulator = () => (
  <Icon>
    <BlueprintTile id="sim" />
    <path d="m55.500 19 17 8c2.500 1.300 3 2.800 2.300 5L53.500 72.500c-1 2-2.500 2.500-4.500 1.600L31 64.500c-2.300-1.200-3-3-2-5.500L51 20.500c1-2 2.500-2.500 4.500-1.500Z" fill="#141417" />
    <path d="M45 36.500 54 55M42 44.500h17" stroke="#e2e2e6" strokeWidth="5.500" strokeLinecap="round" />
  </Icon>
);

const Downloads = () => (
  <Icon>
    <Fade id="dlS" from="#b173b8" to="#d799b6" />
    <rect x="12.500" y="-6.500" width="47" height="30" fill="#fdfdfd" />
    <path d="M14-3.500h44M14-1h12" stroke="#c9c9d6" strokeWidth="0.800" />
    <rect x="16" y="1.500" width="40" height="14" fill="#5f7d5a" />
    <path d="m18 2 6 8 5-7 4 10 8-9 5 7 7-8" fill="none" stroke="#e3ece0" strokeWidth="2.400" />
    <rect x="-1" y="14" width="74.500" height="51.500" fill="#fdfdfd" />
    <rect x="2" y="17" width="68" height="45" fill="url(#dlS)" />
    <path d="M18 22c10-4 20 2 30 0s14 4 20 2v6c-12-4-20 4-34-1s-14 0-20-2Z" fill="#6f5394" opacity="0.700" />
    <path d="M2 43h68v19H2Z" fill="#8e7ab8" />
    <path d="M2 43h30c8-1 10-4 18-5s14-3 20-4v16c-10-1-16 1-22-2s-14-3-24-4Z" fill="#3a2f50" />
    <path d="M2 52c10-3 18 1 26 4s20 1 42 0v6H2Z" fill="#332a45" />
    <text x="19" y="42" fontFamily='"Liberation Sans", sans-serif' fontWeight="700" fontSize="8" fill="#fff" fillOpacity="0.550">Copyright</text>
  </Icon>
);

const Trash = () => (
  <Icon>
    <linearGradient id="trB" x1="0" y1="0" x2="1" y2="0"><stop offset="0" stopColor="#666a6d" /><stop offset="0.500" stopColor="#74797c" /><stop offset="1" stopColor="#5e6265" /></linearGradient>
    <path d="M5 4l7.500 63c.8 5 8 8.500 23.500 8.500S58.700 72 59.500 67L67 4Z" fill="url(#trB)" />
    <ellipse cx="36" cy="4.500" rx="31" ry="7.500" fill="#5b544e" stroke="#a5a6a6" strokeWidth="1.400" />
    <path d="M13 64c4 7 42 7 46 0l-.5 4c-2 9-43 9-45 0Z" fill="#b3b8ba" opacity="0.450" />
  </Icon>
);

const DOCK = [
  [Finder, 1], [Launchpad], [AppStore], [Mail], [Safari], [Brave, 1], [Chrome, 1], [Edge], [Messages],
  [FaceTime], [Terminal], [Xcode], [AndroidStudio, 1], [VSCode], [Shortcuts], [Reminders], [Notes],
  [Settings], [Rocket], [Sketch], [AfterEffects], [Premiere], [Illustrator], [Photoshop], [FinalCut],
  [Motion], [Rize], [Slack], [Postman, 1], [Preview, 1], [Simulator, 1],
];

function Dock() {
  return (
    <DockBar>
      {DOCK.map(([Glyph, running], i) => (
        <DockItem key={i}>
          <Glyph />
          {running ? <RunningDot /> : null}
        </DockItem>
      ))}
      <DockRule />
      <DockItem><Downloads /></DockItem>
      <DockItem><Trash /></DockItem>
    </DockBar>
  );
}

export default function App() {
  return (
    <Desktop>
      <GlobalStyle />
      <WallpaperTexture />
      <SystemMenuBar />
      <Window>
        <BrowserChrome />
        <DataGrid />
      </Window>
      <Dock />
    </Desktop>
  );
}
